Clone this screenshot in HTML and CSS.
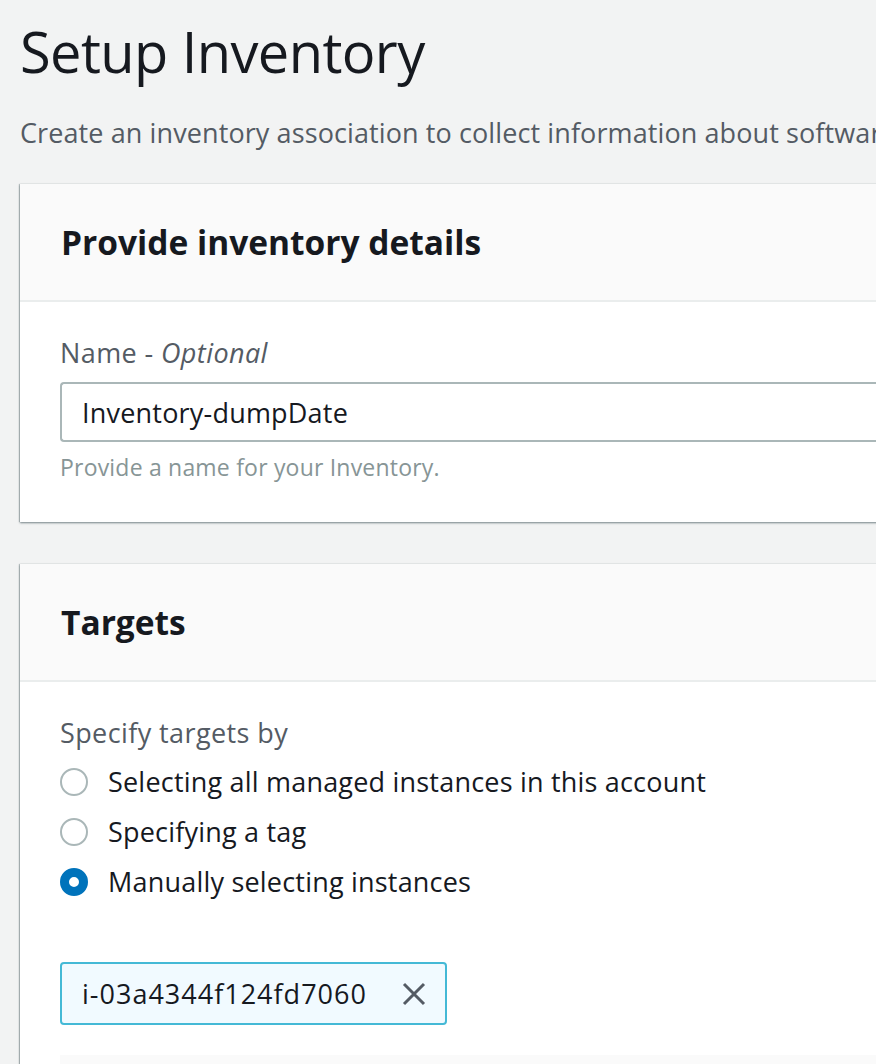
FILE: index.html
```html
<!DOCTYPE html>
<html>
<head>
<meta charset="utf-8">
<link rel="stylesheet" href="styles.css">
</head>
<body>
<div class="page">
  <h1 class="title">Setup Inventory</h1>
  <p class="subtitle">Create an inventory association to collect information about software</p>

  <section class="card">
    <header class="card-header"><h2>Provide inventory details</h2></header>
    <div class="card-body">
      <div class="label">Name - <em>Optional</em></div>
      <div class="input">Inventory-dumpDate</div>
      <div class="hint">Provide a name for your Inventory.</div>
    </div>
  </section>

  <section class="card">
    <header class="card-header"><h2>Targets</h2></header>
    <div class="card-body targets">
      <div class="label">Specify targets by</div>
      <div class="radios">
        <div class="radio"><span class="dot"></span><span>Selecting all managed instances in this account</span></div>
        <div class="radio"><span class="dot"></span><span>Specifying a tag</span></div>
        <div class="radio"><span class="dot checked"></span><span>Manually selecting instances</span></div>
      </div>
      <div class="chip">
        <span>i-03a4344f124fd7060</span>
        <svg class="x" viewBox="0 0 26 26" width="26" height="26"><path d="M3 3 L23 23 M23 3 L3 23" stroke="#545b64" stroke-width="3" fill="none"/></svg>
      </div>
      <div class="table-stub"></div>
    </div>
  </section>
</div>
</body>
</html>
```
FILE: styles.css
```css
html, body {
  margin: 0;
  padding: 0;
  background: #f2f3f3;
  overflow: hidden;
}
body {
  font-family: "Open Sans", "Noto Sans", sans-serif;
  color: #16191f;
}
.page {
  padding: 0 0 0 20px;
  width: 1400px;
}
.title {
  margin: 0;
  padding-top: 15px;
  font-size: 56px;
  font-weight: 400;
  line-height: 72px;
  letter-spacing: -0.6px;
}
.subtitle {
  margin: 0;
  padding-top: 29px;
  font-size: 27px;
  line-height: 34px;
  letter-spacing: 0.1px;
  color: #545b64;
  white-space: nowrap;
  overflow: hidden;
  width: 856px;
}
.card {
  margin-top: 34px;
  background: #fff;
  box-shadow: 0 1px 2px rgba(0,28,36,0.5), -1px 0 1px rgba(0,28,36,0.2);
}
.card + .card { margin-top: 42px; }
.card-header {
  background: #fafafa;
  border-bottom: 2px solid #eaeded;
  height: 116px;
  display: flex;
  align-items: center;
  padding-left: 41px;
}
.card-header h2 {
  margin: 0;
  font-size: 33.5px;
  font-weight: 700;
}
.card-body {
  padding: 34px 0 40px 40px;
}
.label {
  font-size: 27px;
  line-height: 34px;
  letter-spacing: 0.4px;
  color: #545b64;
}
.label em { font-style: italic; }
.input {
  margin-top: 12px;
  height: 56px;
  border: 2px solid #aab7b8;
  border-right: none;
  border-radius: 4px 0 0 4px;
  display: flex;
  align-items: center;
  padding-left: 20px;
  font-size: 27px;
  letter-spacing: 0.2px;
}
.hint {
  margin-top: 10px;
  font-size: 23px;
  line-height: 30px;
  letter-spacing: 0.2px;
  color: #879596;
}
.targets { padding-top: 34px; padding-bottom: 0; }
.radios {
  display: flex;
  flex-direction: column;
  gap: 14px;
  margin-top: 14px;
}
.radio {
  display: flex;
  align-items: center;
  gap: 20px;
  font-size: 27px;
  letter-spacing: 0.2px;
  line-height: 36px;
}
.dot {
  width: 24px;
  height: 24px;
  border: 2px solid #aab7b8;
  border-radius: 50%;
  box-sizing: content-box;
  flex: none;
}
.dot.checked {
  border: 9px solid #0073bb;
  width: 10px;
  height: 10px;
  background: #fff;
}
.chip {
  margin-top: 62px;
  box-sizing: border-box;
  width: 387px;
  height: 63px;
  border: 2px solid #44b9d6;
  border-radius: 4px;
  background: #f1faff;
  display: flex;
  align-items: center;
  justify-content: space-between;
  padding: 0 18px 0 20px;
  font-size: 27px;
  letter-spacing: 1px;
}
.table-stub {
  margin-top: 30px;
  height: 60px;
  background: #fafafa;
}
```
